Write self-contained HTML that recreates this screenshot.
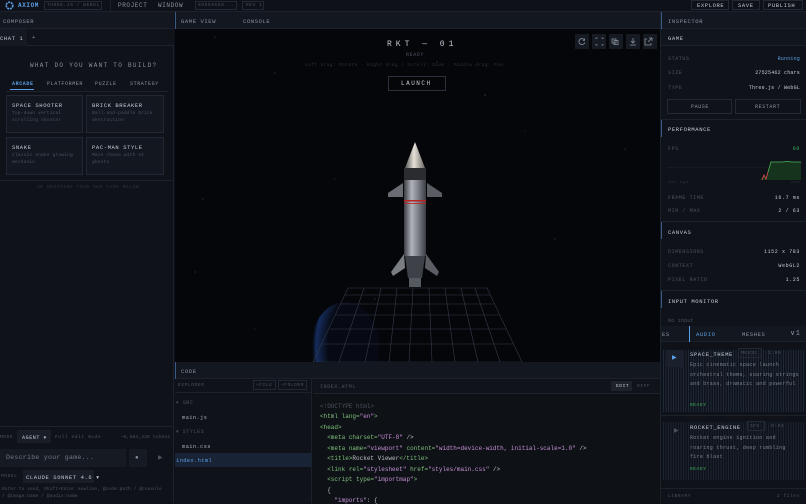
<!DOCTYPE html>
<html><head><meta charset="utf-8"><style>
*{margin:0;padding:0;box-sizing:border-box}
body{width:806px;height:503px;overflow:hidden;background:#0e1117;font-family:"Liberation Mono",monospace;color:#8b929c;font-size:5px;position:relative}
.a{position:absolute}
.t{position:absolute;white-space:nowrap;letter-spacing:.6px}
.hd{background:#131820;border-bottom:1px solid #1c222c}
.b{border:1px solid #222934}
.br{color:#c3cad3}
.dm{color:#4a525e}
.bl{color:#5a9ee8}
.gr{color:#3fae5a}
.code{font-size:6px;letter-spacing:0;color:#b9c0c8}
.code div{position:absolute;left:320px;white-space:pre}
.k{color:#7ec07a}.s{color:#c78fd6}
</style></head><body>
<!-- top bar -->
<div class="a" style="left:0;top:0;width:806px;height:12px;background:#0e1117;border-bottom:1px solid #1c222c"></div>
<svg class="a" style="left:5px;top:1px" width="9" height="9" viewBox="0 0 9 9"><circle cx="4.5" cy="4.5" r="3.3" fill="none" stroke="#5a9ee8" stroke-width="1.6" stroke-dasharray="2 0.8"/></svg>
<div class="t bl" style="left:18px;top:2px;font-size:6px;font-weight:bold">AXIOM</div>
<div class="a b" style="left:44px;top:1px;width:58px;height:9px"></div>
<div class="t dm" style="left:47px;top:3px;font-size:4.5px">THREE.JS / WEBGL</div>
<div class="a" style="left:110px;top:0;width:1px;height:12px;background:#1c222c"></div>
<div class="t" style="left:118px;top:2px;font-size:6px">PROJECT</div>
<div class="t" style="left:158px;top:2px;font-size:6px">WINDOW</div>
<div class="a b" style="left:195px;top:1px;width:42px;height:9px"></div>
<div class="t dm" style="left:198px;top:3px;font-size:4.5px">69b69550...</div>
<div class="a b" style="left:242px;top:1px;width:22px;height:9px"></div>
<div class="t dm" style="left:246px;top:3px;font-size:4.5px">REV 1</div>
<div class="a b" style="left:691px;top:0;width:38px;height:10px"></div>
<div class="t br" style="left:697px;top:2px;font-size:5.5px">EXPLORE</div>
<div class="a b" style="left:732px;top:0;width:28px;height:10px"></div>
<div class="t br" style="left:738px;top:2px;font-size:5.5px">SAVE</div>
<div class="a b" style="left:763px;top:0;width:40px;height:10px"></div>
<div class="t br" style="left:768px;top:2px;font-size:5.5px">PUBLISH</div>

<!-- left panel -->
<div class="a" style="left:0;top:12px;width:174px;height:491px;background:#0f1319;border-right:1px solid #1c222c"></div>
<div class="a hd" style="left:0;top:12px;width:174px;height:17px"></div>
<div class="t" style="left:3px;top:18px;font-size:5.5px">COMPOSER</div>
<div class="a" style="left:0;top:29px;width:174px;height:17px;background:#10141a;border-bottom:1px solid #1c222c"></div>
<div class="a" style="left:0;top:29px;width:27px;height:17px;background:#151a22"></div>
<div class="t br" style="left:0;top:35px;font-size:5.5px">CHAT 1</div>
<div class="t" style="left:32px;top:34px;font-size:5.5px">+</div>
<div class="t" style="left:30px;top:62px;font-size:6px;letter-spacing:1.3px">WHAT DO YOU WANT TO BUILD?</div>
<div class="a" style="left:6px;top:91px;width:162px;height:1px;background:#1c222c"></div>
<div class="t bl" style="left:12px;top:81px;font-weight:bold">ARCADE</div>
<div class="a" style="left:10px;top:89px;width:24px;height:1px;background:#5a9ee8"></div>
<div class="t" style="left:47px;top:81px">PLATFORMER</div>
<div class="t" style="left:95px;top:81px">PUZZLE</div>
<div class="t" style="left:130px;top:81px">STRATEGY</div>
<div class="a b" style="left:6px;top:95px;width:77px;height:38px;background:#131820"></div>
<div class="a b" style="left:86px;top:95px;width:78px;height:38px;background:#131820"></div>
<div class="a b" style="left:6px;top:137px;width:77px;height:38px;background:#131820"></div>
<div class="a b" style="left:86px;top:137px;width:78px;height:38px;background:#131820"></div>
<div class="t br" style="left:12px;top:102px;font-size:5.5px">SPACE SHOOTER</div>
<div class="t dm" style="left:12px;top:111px;font-size:4.5px;line-height:6.5px;white-space:normal;width:66px;letter-spacing:.2px">Top-down vertical scrolling shooter</div>
<div class="t br" style="left:92px;top:102px;font-size:5.5px">BRICK BREAKER</div>
<div class="t dm" style="left:92px;top:111px;font-size:4.5px;line-height:6.5px;white-space:normal;width:70px;letter-spacing:.2px">Ball-and-paddle brick destruction</div>
<div class="t br" style="left:12px;top:144px;font-size:5.5px">SNAKE</div>
<div class="t dm" style="left:12px;top:153px;font-size:4.5px;line-height:6.5px;white-space:normal;width:68px;letter-spacing:.2px">Classic snake growing mechanic</div>
<div class="t br" style="left:92px;top:144px;font-size:5.5px">PAC-MAN STYLE</div>
<div class="t dm" style="left:92px;top:153px;font-size:4.5px;line-height:6.5px;white-space:normal;width:62px;letter-spacing:.2px">Maze chase with AI ghosts</div>
<div class="a" style="left:0;top:180px;width:174px;height:1px;background:#1c222c"></div>
<div class="t" style="left:37px;top:185px;font-size:4.5px;color:#2e343d">OR DESCRIBE YOUR OWN GAME BELOW</div>
<div class="a" style="left:0;top:426px;width:174px;height:1px;background:#1c222c"></div>
<div class="t dm" style="left:0;top:435px;font-size:4.5px">MODE</div>
<div class="a" style="left:17px;top:430px;width:34px;height:13px;background:#181d26"></div>
<div class="t br" style="left:22px;top:435px">AGENT ▾</div>
<div class="t dm" style="left:55px;top:435px;font-size:4.5px">Full edit mode</div>
<div class="t dm" style="left:121px;top:435px;font-size:4.5px;letter-spacing:.2px">~6,884,430 tokens</div>
<div class="a" style="left:0;top:449px;width:126px;height:18px;background:#161b23"></div>
<div class="t" style="left:6px;top:454px;font-size:6.5px;letter-spacing:.3px;color:#6f7782">Describe your game...</div>
<div class="a" style="left:129px;top:449px;width:18px;height:18px;background:#161b23"></div>
<div class="t" style="left:135px;top:454px;font-size:6px">●</div>
<div class="t dm" style="left:158px;top:454px;font-size:6px">▶</div>
<div class="t dm" style="left:1px;top:474px;font-size:4.5px">MODEL</div>
<div class="a" style="left:23px;top:470px;width:71px;height:13px;background:#181d26"></div>
<div class="t br" style="left:26px;top:474px;font-size:5.5px">CLAUDE SONNET 4.6 ▾</div>
<div class="t dm" style="left:2px;top:486px;font-size:4.5px;letter-spacing:.1px;line-height:7px">Enter to send, Shift+Enter newline, @code:path / @console<br>/ @image:name / @audio:name</div>

<!-- game view -->
<div class="a hd" style="left:175px;top:12px;width:485px;height:17px"></div>
<div class="a" style="left:175px;top:12px;width:1px;height:17px;background:#3a5a88"></div>
<div class="t" style="left:181px;top:18px;font-size:5.5px">GAME VIEW</div>
<div class="t" style="left:243px;top:18px;font-size:5.5px">CONSOLE</div>
<div class="a" style="left:175px;top:29px;width:485px;height:333px;background:#05060a"></div>
<svg class="a" style="left:175px;top:29px" width="485" height="333">
<g fill="#556">
<circle cx="40" cy="8" r=".5"/><circle cx="100" cy="44" r=".5"/><circle cx="262" cy="33" r=".5"/><circle cx="310" cy="66" r=".6"/><circle cx="28" cy="170" r=".5"/><circle cx="20" cy="243" r=".5"/><circle cx="450" cy="120" r=".5"/><circle cx="380" cy="210" r=".5"/><circle cx="200" cy="270" r=".5"/><circle cx="80" cy="300" r=".4"/><circle cx="350" cy="102" r=".4"/><circle cx="160" cy="150" r=".4"/></g>
<defs><radialGradient id="pl" cx="1" cy=".5" r="1"><stop offset=".75" stop-color="#070a14"/><stop offset=".93" stop-color="#152c5c"/><stop offset="1" stop-color="#05060a" stop-opacity="0"/></radialGradient>
<linearGradient id="body" x1="0" x2="1"><stop offset="0" stop-color="#3a3d44"/><stop offset=".35" stop-color="#b0b3ba"/><stop offset=".6" stop-color="#85888f"/><stop offset="1" stop-color="#3a3d44"/></linearGradient>
<linearGradient id="nose" x1="0" x2="1"><stop offset="0" stop-color="#555"/><stop offset=".45" stop-color="#e6e2da"/><stop offset="1" stop-color="#6a6560"/></linearGradient></defs>
<ellipse cx="170" cy="318" rx="34" ry="45" fill="url(#pl)"/>
<g stroke="#343b49" stroke-width=".6" fill="none">
<path d="M173 259 L312 259 L347 333 L138 333 Z"/>
<path d="M170 266H315M166 275H319M161 286H324M155 300H331M148 315H338"/>
<path d="M189 259L164 333M206 259L190 333M222 259L214 333M238 259L234 333M254 259L257 333M270 259L280 333M286 259L303 333M300 259L325 333"/>
</g>
<g transform="translate(-175,-29)">
<path d="M403 183 L388 193 L388 197 L403 197Z" fill="#6a6d74"/>
<path d="M427 183 L442 193 L442 197 L427 197Z" fill="#5a5d64"/>
<path d="M404 254 L391 272 L393 276 L405 268Z" fill="#7a7d84"/>
<path d="M426 254 L439 272 L437 276 L425 268Z" fill="#5a5d64"/>
<path d="M415 142 L405 168 L425 168Z" fill="url(#nose)"/>
<rect x="404" y="168" width="22" height="88" fill="url(#body)"/>
<rect x="404" y="168" width="22" height="12" fill="#2a2c30"/>
<rect x="404" y="200" width="22" height="1.5" fill="#b22"/>
<rect x="404" y="203" width="22" height=".8" fill="#b22"/>
<path d="M405 256 L425 256 L422 278 L408 278Z" fill="#3e4148"/>
<rect x="409" y="278" width="12" height="9" fill="#555960"/>
</g>
</svg>
<div class="t br" style="left:387px;top:40px;font-size:8px;letter-spacing:4px">RKT — 01</div>
<div class="t dm" style="left:406px;top:52px;font-size:5px">READY</div>
<div class="t" style="left:305px;top:63px;font-size:4.5px;color:#2c323b;letter-spacing:.4px">Left drag: Rotate · Right drag / Scroll: Zoom · Middle drag: Pan</div>
<div class="a b" style="left:388px;top:76px;width:58px;height:15px;border-color:#2a313c"></div>
<div class="t br" style="left:401px;top:80px;font-size:6px;letter-spacing:1.5px">LAUNCH</div>
<div class="a" style="left:575px;top:34px;width:14px;height:15px;background:#161a22"></div>
<div class="a" style="left:592px;top:34px;width:14px;height:15px;background:#161a22"></div>
<div class="a" style="left:609px;top:34px;width:14px;height:15px;background:#161a22"></div>
<div class="a" style="left:626px;top:34px;width:14px;height:15px;background:#161a22"></div>
<div class="a" style="left:643px;top:34px;width:14px;height:15px;background:#161a22"></div>
<svg class="a" style="left:575px;top:34px" width="82" height="15" fill="none" stroke="#8b929c" stroke-width=".8">
<path d="M9.5 6A3 3 0 1 0 9.8 8.5M9.5 4.5V6.3H7.8"/>
<path d="M21 5V4h1.5M26.5 4H28v1M28 10v1h-1.5M22.5 11H21v-1"/>
<rect x="37" y="5" width="4" height="4"/><rect x="39" y="6.5" width="4" height="4"/>
<path d="M58 4v5M56 7l2 2 2-2M55 11h6"/>
<path d="M72 5h-2v6h6v-2M74 4h3v3M77 4l-4 4"/>
</svg>

<!-- code -->
<div class="a hd" style="left:175px;top:362px;width:485px;height:17px"></div>
<div class="a" style="left:175px;top:362px;width:1px;height:17px;background:#3a5a88"></div>
<div class="t" style="left:181px;top:368px;font-size:5.5px">CODE</div>
<div class="a" style="left:175px;top:379px;width:137px;height:124px;background:#0f1319;border-right:1px solid #1c222c"></div>
<div class="a" style="left:175px;top:379px;width:137px;height:14px;border-bottom:1px solid #1c222c"></div>
<div class="t dm" style="left:178px;top:383px;font-size:4.5px">EXPLORER</div>
<div class="a b" style="left:253px;top:380px;width:23px;height:10px"></div>
<div class="t dm" style="left:256px;top:383px;font-size:4.5px">+FILE</div>
<div class="a b" style="left:278px;top:380px;width:29px;height:10px"></div>
<div class="t dm" style="left:281px;top:383px;font-size:4.5px">+FOLDER</div>
<div class="t dm" style="left:176px;top:400px;font-size:5px">▾ SRC</div>
<div class="t" style="left:182px;top:414px;font-size:5.5px;letter-spacing:.3px;color:#a0a7b0">main.js</div>
<div class="t dm" style="left:176px;top:429px;font-size:5px">▾ STYLES</div>
<div class="t" style="left:182px;top:443px;font-size:5.5px;letter-spacing:.3px;color:#a0a7b0">main.css</div>
<div class="a" style="left:175px;top:453px;width:136px;height:14px;background:#182335"></div>
<div class="t bl" style="left:176px;top:457px;font-size:5.5px;letter-spacing:.3px">index.html</div>
<div class="a" style="left:313px;top:379px;width:347px;height:124px;background:#0e1116"></div>
<div class="a" style="left:313px;top:379px;width:347px;height:15px;border-bottom:1px solid #1c222c;background:#10141a"></div>
<div class="t dm" style="left:320px;top:384px;font-size:5px">INDEX.HTML</div>
<div class="a" style="left:611px;top:381px;width:21px;height:10px;background:#1d222b"></div>
<div class="t br" style="left:616px;top:384px;font-size:4.5px">EDIT</div>
<div class="t dm" style="left:637px;top:384px;font-size:4.5px">DIFF</div>
<div class="code">
<div style="top:403px"><span class="dm">&lt;!DOCTYPE html&gt;</span></div>
<div style="top:413px"><span class="k">&lt;html</span> <span class="k">lang=</span><span class="s">"en"</span><span class="k">&gt;</span></div>
<div style="top:424px"><span class="k">&lt;head&gt;</span></div>
<div style="top:434px">  <span class="k">&lt;meta</span> <span class="k">charset=</span><span class="s">"UTF-8"</span> /&gt;</div>
<div style="top:445px">  <span class="k">&lt;meta</span> <span class="k">name=</span><span class="s">"viewport"</span> <span class="k">content=</span><span class="s">"width=device-width, initial-scale=1.0"</span> /&gt;</div>
<div style="top:455px">  <span class="k">&lt;title&gt;</span>Rocket Viewer<span class="k">&lt;/title&gt;</span></div>
<div style="top:466px">  <span class="k">&lt;link</span> <span class="k">rel=</span><span class="s">"stylesheet"</span> <span class="k">href=</span><span class="s">"styles/main.css"</span> /&gt;</div>
<div style="top:476px">  <span class="k">&lt;script</span> <span class="k">type=</span><span class="s">"importmap"</span><span class="k">&gt;</span></div>
<div style="top:487px">  {</div>
<div style="top:497px">    <span class="s">"imports"</span>: {</div>
</div>

<!-- right panel -->
<div class="a" style="left:660px;top:12px;width:146px;height:491px;background:#0f1319;border-left:1px solid #1c222c"></div>
<div class="a hd" style="left:661px;top:12px;width:145px;height:17px"></div>
<div class="a" style="left:661px;top:12px;width:1px;height:17px;background:#3a5a88"></div>
<div class="t" style="left:668px;top:18px;font-size:5.5px">INSPECTOR</div>
<div class="a hd" style="left:661px;top:29px;width:145px;height:17px;background:#11151c"></div>
<div class="t br" style="left:668px;top:35px;font-size:5.5px">GAME</div>
<div class="t dm" style="left:668px;top:56px">STATUS</div><div class="t bl" style="right:6px;top:56px;letter-spacing:.2px">Running</div>
<div class="t dm" style="left:668px;top:70px">SIZE</div><div class="t br" style="right:6px;top:70px;letter-spacing:.2px">27525462 chars</div>
<div class="t dm" style="left:668px;top:85px">TYPE</div><div class="t br" style="right:6px;top:85px;letter-spacing:.2px">Three.js / WebGL</div>
<div class="a b" style="left:667px;top:99px;width:65px;height:15px"></div>
<div class="t" style="left:691px;top:104px">PAUSE</div>
<div class="a b" style="left:735px;top:99px;width:66px;height:15px"></div>
<div class="t" style="left:755px;top:104px">RESTART</div>
<div class="a" style="left:661px;top:119px;width:145px;height:1px;background:#1c222c"></div>
<div class="a" style="left:661px;top:120px;width:1px;height:17px;background:#3a5a88"></div>
<div class="t br" style="left:668px;top:126px;font-size:5.5px">PERFORMANCE</div>
<div class="t dm" style="left:668px;top:146px">FPS</div><div class="t gr" style="right:6px;top:146px">60</div>
<svg class="a" style="left:667px;top:155px" width="134" height="26"><path d="M0 12.5H134" stroke="#1c222c" stroke-dasharray="1 1"/><path d="M93 25 L97 20 L99 24 L101 17 L104 7 L134 7 V25Z" fill="#15331d"/><path d="M95 25 L97 20 L99 24 L101 17" stroke="#e05050" fill="none" stroke-width=".8"/><path d="M101 17 L104 7 L115 7 L120 6.5 L126 7 L134 7" stroke="#4ab55a" fill="none" stroke-width=".8"/></svg>
<div class="t" style="left:668px;top:181px;font-size:4px;color:#2e343d">30s ago</div><div class="t" style="right:6px;top:181px;font-size:4px;color:#2e343d">now</div>
<div class="t dm" style="left:668px;top:195px">FRAME TIME</div><div class="t br" style="right:6px;top:195px">16.7 ms</div>
<div class="t dm" style="left:668px;top:208px">MIN / MAX</div><div class="t br" style="right:6px;top:208px">2 / 63</div>
<div class="a" style="left:661px;top:221px;width:145px;height:1px;background:#1c222c"></div>
<div class="a" style="left:661px;top:222px;width:1px;height:17px;background:#3a5a88"></div>
<div class="t br" style="left:668px;top:229px;font-size:5.5px">CANVAS</div>
<div class="t dm" style="left:668px;top:249px">DIMENSIONS</div><div class="t br" style="right:6px;top:249px">1152 x 783</div>
<div class="t dm" style="left:668px;top:263px">CONTEXT</div><div class="t br" style="right:6px;top:263px">WebGL2</div>
<div class="t dm" style="left:668px;top:277px">PIXEL RATIO</div><div class="t br" style="right:6px;top:277px">1.25</div>
<div class="a" style="left:661px;top:290px;width:145px;height:1px;background:#1c222c"></div>
<div class="a" style="left:661px;top:291px;width:1px;height:17px;background:#3a5a88"></div>
<div class="t br" style="left:668px;top:298px;font-size:5.5px">INPUT MONITOR</div>
<div class="t dm" style="left:668px;top:318px;letter-spacing:.2px">No input</div>
<div class="a" style="left:661px;top:326px;width:145px;height:16px;background:#131820;border-bottom:1px solid #1c222c"></div>
<div class="t" style="left:662px;top:331px;font-size:5.5px">ES</div>
<div class="a" style="left:689px;top:326px;width:1px;height:16px;background:#5a9ee8"></div>
<div class="t bl" style="left:696px;top:331px;font-size:5.5px">AUDIO</div>
<div class="t" style="left:742px;top:331px;font-size:5.5px">MESHES</div>
<div class="t" style="left:790px;top:329px;font-size:7px">∨1</div>
<div class="a" style="left:663px;top:350px;width:141px;height:62px;background:repeating-linear-gradient(90deg,rgba(70,100,140,.28) 0 1px,transparent 1px 2.5px)"></div>
<div class="a" style="left:663px;top:422px;width:141px;height:58px;background:repeating-linear-gradient(90deg,rgba(70,100,140,.2) 0 1px,transparent 1px 2.5px)"></div>
<div class="a" style="left:667px;top:350px;width:17px;height:17px;background:#1a212c"></div>
<div class="t bl" style="left:672px;top:354px;font-size:6px">▶</div>
<div class="t br" style="left:690px;top:351px;font-size:5.5px">SPACE_THEME</div>
<div class="a b" style="left:738px;top:348px;width:24px;height:10px"></div>
<div class="t dm" style="left:741px;top:351px;font-size:4.5px">MUSIC</div>
<div class="t dm" style="left:768px;top:351px;font-size:4.5px">1:00</div>
<div class="t" style="left:690px;top:361px;font-size:5px;line-height:9.5px;white-space:normal;width:116px;color:#7a818b;letter-spacing:.3px">Epic cinematic space launch orchestral theme, soaring strings and brass, dramatic and powerful</div>
<div class="t gr" style="left:690px;top:403px;font-size:4.5px">READY</div>
<div class="a" style="left:661px;top:415px;width:145px;height:1px;background:#1c222c"></div>
<div class="t dm" style="left:674px;top:427px;font-size:6px">▶</div>
<div class="t br" style="left:690px;top:424px;font-size:5.5px">ROCKET_ENGINE</div>
<div class="a b" style="left:747px;top:421px;width:18px;height:10px"></div>
<div class="t dm" style="left:750px;top:424px;font-size:4.5px">SFX</div>
<div class="t dm" style="left:771px;top:424px;font-size:4.5px">0:04</div>
<div class="t" style="left:690px;top:434px;font-size:5px;line-height:9.5px;white-space:normal;width:112px;color:#7a818b;letter-spacing:.3px">Rocket engine ignition and roaring thrust, deep rumbling fire blast</div>
<div class="t gr" style="left:690px;top:467px;font-size:4.5px">READY</div>
<div class="a" style="left:661px;top:488px;width:145px;height:1px;background:#1c222c"></div>
<div class="t dm" style="left:668px;top:494px;font-size:4.5px">LIBRARY</div>
<div class="t dm" style="right:6px;top:494px;font-size:4.5px">2 files</div>
</body></html>
